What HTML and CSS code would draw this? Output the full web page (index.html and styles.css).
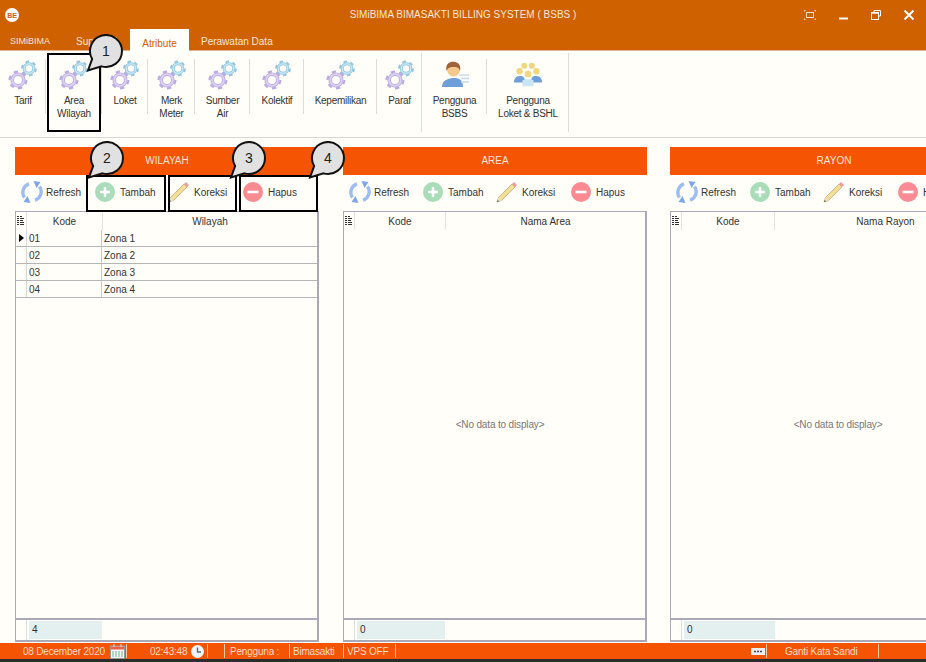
FILE: index.html
```html
<!DOCTYPE html>
<html>
<head>
    <title>SIMiBIMA BIMASAKTI BILLING SYSTEM ( BSBS )</title>
    <link rel="stylesheet" href="styles.css">
</head>
<body>
    <svg class="defs" width="0" height="0">
        <symbol id="gears" viewBox="0 0 30 30">
            <circle cx="21" cy="8.5" r="4.8" fill="none" stroke="#8fc6dd" stroke-width="3"/>
            <circle cx="21" cy="8.5" r="4.8" fill="none" stroke="#c8e6f1" stroke-width="1.4"/>
            <circle cx="21" cy="8.5" r="7" fill="none" stroke="#8fc6dd" stroke-width="1.8" pathLength="60" stroke-dasharray="5 5"/>
            <circle cx="10" cy="20" r="5.8" fill="none" stroke="#bcabe2" stroke-width="3.6"/>
            <circle cx="10" cy="20" r="5.8" fill="none" stroke="#dcd2f2" stroke-width="1.8"/>
            <circle cx="10" cy="20" r="8.4" fill="none" stroke="#bcabe2" stroke-width="2.2" pathLength="60" stroke-dasharray="5 5"/>
        </symbol>
        <symbol id="refresh" viewBox="0 0 22 22">
            <path d="M3.5 16.5 A9 9 0 0 1 8 2.8" fill="none" stroke="#9dbdf0" stroke-width="3.4"/>
            <path d="M18.5 5.5 A9 9 0 0 1 14 19.2" fill="none" stroke="#9dbdf0" stroke-width="3.4"/>
            <path d="M12.5 0 L19.5 1 L15.5 7 Z" fill="#7ea6e8"/>
            <path d="M9.5 22 L2.5 21 L6.5 15 Z" fill="#7ea6e8"/>
        </symbol>
        <symbol id="plus" viewBox="0 0 20 20">
            <circle cx="10" cy="10" r="10" fill="#a9dcb9"/>
            <path d="M10 5 V15 M5 10 H15" stroke="#fff" stroke-width="2.4"/>
        </symbol>
        <symbol id="pencil" viewBox="0 0 22 22">
            <path d="M1 21 L2.5 16.5 L16 3 L19 6 L5.5 19.5 Z" fill="#f2de98" stroke="#bda562" stroke-width=".7"/>
            <path d="M1 21 L2.5 16.5 L5.5 19.5 Z" fill="#eadfc6"/>
            <path d="M1 21 L1.7 18.9 L3.1 20.3 Z" fill="#555"/>
            <path d="M16 3 L18 1 L21 4 L19 6 Z" fill="#ee9aa0"/>
        </symbol>
        <symbol id="minus" viewBox="0 0 20 20">
            <circle cx="10" cy="10" r="10" fill="#fb8b93"/>
            <path d="M4.5 10 H15.5" stroke="#fff" stroke-width="2.6"/>
        </symbol>
        <symbol id="lines" viewBox="0 0 8 10">
            <path d="M0 .5 H2 M0 2.5 H2 M0 4.5 H2 M0 6.5 H2 M0 8.5 H2 M3 .5 H5 M3 2.5 H7 M3 4.5 H6 M3 6.5 H7 M3 8.5 H7" stroke="#333" stroke-width="1"/>
        </symbol>
    </svg>

    <header class="titlebar">
        <svg class="logo" width="14" height="14" viewBox="0 0 14 14">
            <circle cx="7" cy="7" r="7" fill="#fff"/>
            <text x="7" y="9.6" text-anchor="middle" font-size="7" font-weight="bold" fill="#d8561a">BE</text>
        </svg>
        <span class="title">SIMiBIMA BIMASAKTI BILLING SYSTEM ( BSBS )</span>
        <div class="winbtns">
            <svg width="12" height="10" viewBox="0 0 12 10">
                <path d="M0 2 V0 H2 M10 0 H12 V2 M12 8 V10 H10 M2 10 H0 V8" fill="none" stroke="#f6ddc6"/>
                <rect x="2.5" y="2.5" width="7" height="5" fill="none" stroke="#f6ddc6"/>
            </svg>
            <svg width="9" height="10" viewBox="0 0 9 10"><path d="M0 8.5 H9" stroke="#fff" stroke-width="2"/></svg>
            <svg width="10" height="10" viewBox="0 0 10 10">
                <path d="M3 2 V.5 H9.5 V6 H7.5" fill="none" stroke="#fff"/>
                <rect x=".5" y="2.5" width="7" height="7" fill="none" stroke="#fff"/>
                <path d="M0 3 H8" stroke="#fff" stroke-width="1.4"/>
            </svg>
            <svg width="10" height="10" viewBox="0 0 10 10"><path d="M.5 .5 L9.5 9.5 M9.5 .5 L.5 9.5" stroke="#fff" stroke-width="2"/></svg>
        </div>
    </header>

    <nav class="tabs">
        <a class="tab tab-simibima">SIMiBIMA</a>
        <a class="tab tab-super">Supervisi</a>
        <a class="tab tab-active">Atribute</a>
        <a class="tab">Perawatan Data</a>
    </nav>

    <section class="ribbon">
        <div class="rb-item w45"><svg class="gear"><use href="#gears"/></svg><span>Tarif</span></div>
        <div class="rb-item w57"><svg class="gear"><use href="#gears"/></svg><span>Area<br>Wilayah</span></div>
        <div class="rb-item w45"><svg class="gear"><use href="#gears"/></svg><span>Loket</span></div>
        <div class="rb-item w47"><svg class="gear"><use href="#gears"/></svg><span>Merk<br>Meter</span></div>
        <div class="rb-item w55"><svg class="gear"><use href="#gears"/></svg><span>Sumber<br>Air</span></div>
        <div class="rb-item w54"><svg class="gear"><use href="#gears"/></svg><span>Kolektif</span></div>
        <div class="rb-item w73"><svg class="gear"><use href="#gears"/></svg><span>Kepemilikan</span></div>
        <div class="rb-item w44 rb-long"><svg class="gear"><use href="#gears"/></svg><span>Paraf</span></div>
        <div class="rb-item w65">
            <svg class="gear" viewBox="0 0 30 30">
                <path d="M2 27 C2 20 8 19 12 18 H16 C20 19 23 20 23 27 Z" fill="#6f9fd8"/>
                <circle cx="13.5" cy="10" r="6.5" fill="#f5c98d"/>
                <path d="M6.5 11 C5 3 11 1 15 2 C20 3 21 7 20 11 C19 7 16 7 14 7 C11 7 8 7 6.5 11 Z" fill="#a0623a"/>
                <path d="M19 15 H29 M21 18.5 H29 M21 22 H29" stroke="#c5dbe8" stroke-width="1.6"/>
            </svg>
            <span>Pengguna<br>BSBS</span>
        </div>
        <div class="rb-item w82 rb-long">
            <svg class="gear" viewBox="-1 -1 32 32">
                <circle cx="11" cy="5" r="3.2" fill="#f0d67e"/>
                <circle cx="19" cy="5" r="3.2" fill="#f0d67e"/>
                <circle cx="6" cy="11" r="3.4" fill="#f0d67e"/>
                <circle cx="24" cy="11" r="3.4" fill="#f0d67e"/>
                <path d="M0 23 C0 17 4 16 7 16 C10 16 12 18 12 23 Z" fill="#6f9fd8"/>
                <path d="M18 23 C18 18 20 16 23 16 C26 16 30 17 30 23 Z" fill="#6f9fd8"/>
                <path d="M9 27 V21 C10 19 20 19 21 21 V27 Z" fill="#c9e4f3"/>
                <circle cx="15" cy="14" r="3.6" fill="#f0d67e"/>
            </svg>
            <span>Pengguna<br>Loket &amp; BSHL</span>
        </div>
    </section>

    <main class="panels">
        <section class="panel p-wilayah">
            <h3 class="panel-head">WILAYAH</h3>
            <div class="toolbar">
                <a class="tool t-refresh"><svg class="ic22"><use href="#refresh"/></svg>Refresh</a>
                <a class="tool t-add"><svg class="ic20"><use href="#plus"/></svg>Tambah</a>
                <a class="tool t-edit"><svg class="ic22"><use href="#pencil"/></svg>Koreksi</a>
                <a class="tool t-del"><svg class="ic20"><use href="#minus"/></svg>Hapus</a>
            </div>
            <div class="grid">
                <div class="grid-row grid-head">
                    <div class="c-ind"><svg class="ic-lines"><use href="#lines"/></svg></div>
                    <div class="c-kode">Kode</div>
                    <div class="c-name">Wilayah</div>
                </div>
                <div class="grid-body">
                    <div class="grid-row data"><div class="c-ind"><i class="cursor"></i></div><div class="c-kode">01</div><div class="c-name">Zona 1</div></div>
                    <div class="grid-row data"><div class="c-ind"></div><div class="c-kode">02</div><div class="c-name">Zona 2</div></div>
                    <div class="grid-row data"><div class="c-ind"></div><div class="c-kode">03</div><div class="c-name">Zona 3</div></div>
                    <div class="grid-row data"><div class="c-ind"></div><div class="c-kode">04</div><div class="c-name">Zona 4</div></div>
                </div>
                <div class="grid-foot"><div class="c-ind"></div><div class="count">4</div></div>
            </div>
        </section>

        <section class="panel p-area">
            <h3 class="panel-head">AREA</h3>
            <div class="toolbar">
                <a class="tool t-refresh"><svg class="ic22"><use href="#refresh"/></svg>Refresh</a>
                <a class="tool t-add"><svg class="ic20"><use href="#plus"/></svg>Tambah</a>
                <a class="tool t-edit"><svg class="ic22"><use href="#pencil"/></svg>Koreksi</a>
                <a class="tool t-del"><svg class="ic20"><use href="#minus"/></svg>Hapus</a>
            </div>
            <div class="grid">
                <div class="grid-row grid-head">
                    <div class="c-ind"><svg class="ic-lines"><use href="#lines"/></svg></div>
                    <div class="c-kode">Kode</div>
                    <div class="c-name">Nama Area</div>
                </div>
                <div class="grid-body empty">&lt;No data to display&gt;</div>
                <div class="grid-foot"><div class="c-ind"></div><div class="count">0</div></div>
            </div>
        </section>

        <section class="panel p-rayon">
            <h3 class="panel-head">RAYON</h3>
            <div class="toolbar">
                <a class="tool t-refresh"><svg class="ic22"><use href="#refresh"/></svg>Refresh</a>
                <a class="tool t-add"><svg class="ic20"><use href="#plus"/></svg>Tambah</a>
                <a class="tool t-edit"><svg class="ic22"><use href="#pencil"/></svg>Koreksi</a>
                <a class="tool t-del"><svg class="ic20"><use href="#minus"/></svg>Hapus</a>
            </div>
            <div class="grid">
                <div class="grid-row grid-head">
                    <div class="c-ind"><svg class="ic-lines"><use href="#lines"/></svg></div>
                    <div class="c-kode">Kode</div>
                    <div class="c-name">Nama Rayon</div>
                </div>
                <div class="grid-body empty">&lt;No data to display&gt;</div>
                <div class="grid-foot"><div class="c-ind"></div><div class="count">0</div></div>
            </div>
        </section>
    </main>

    <footer class="statusbar">
        <div class="st st-date">08 December 2020
            <svg width="15" height="15" viewBox="0 0 15 15">
                <rect x=".5" y="2" width="14" height="12.5" fill="#f4f4f4" stroke="#999"/>
                <rect x="1" y="2.5" width="13" height="3" fill="#e8604c"/>
                <path d="M2 8 H13 M2 10 H13 M2 12 H13" stroke="#6fb59a" stroke-dasharray="2 1"/>
                <path d="M4 0 V3 M11 0 V3" stroke="#ddd"/>
            </svg>
        </div>
        <div class="st st-time">02:43:48
            <svg width="13" height="13" viewBox="0 0 13 13">
                <circle cx="6.5" cy="6.5" r="6.5" fill="#f2f4f8"/>
                <path d="M6.5 2.5 V7 H10" fill="none" stroke="#5b6a86" stroke-width="1.4"/>
            </svg>
        </div>
        <div class="st st-gap"></div>
        <div class="st st-user">Pengguna :</div>
        <div class="st st-name">Bimasakti</div>
        <div class="st st-vps">VPS OFF</div>
        <div class="st st-spacer"></div>
        <div class="st st-kbd">
            <svg width="14" height="7" viewBox="0 0 14 7">
                <rect width="14" height="7" fill="#eee"/>
                <path d="M3 3.5 H11" stroke="#444" stroke-width="1.4" stroke-dasharray="2 1"/>
            </svg>
        </div>
        <div class="st st-pass">Ganti Kata Sandi</div>
    </footer>
    <div class="strip"></div>

    <!-- penanda langkah di atas layar -->
    <div class="mark m1"></div>
    <div class="mark m2"></div>
    <div class="mark m3"></div>
    <div class="mark m4"></div>

    <div class="callout c1">
        <svg width="40" height="40" viewBox="0 0 40 40"><path d="M4 36.5 L8.1 25 A16 16 0 1 1 17.5 32.4 Z" fill="#e1e1e1" stroke="#111" stroke-width="2"/></svg>
        <span>1</span>
    </div>
    <div class="callout c2">
        <svg width="40" height="40" viewBox="0 0 40 40"><path d="M4 36.5 L8.1 25 A16 16 0 1 1 17.5 32.4 Z" fill="#e1e1e1" stroke="#111" stroke-width="2"/></svg>
        <span>2</span>
    </div>
    <div class="callout c3">
        <svg width="40" height="40" viewBox="0 0 40 40"><path d="M4 36.5 L8.1 25 A16 16 0 1 1 17.5 32.4 Z" fill="#e1e1e1" stroke="#111" stroke-width="2"/></svg>
        <span>3</span>
    </div>
    <div class="callout c4">
        <svg width="40" height="40" viewBox="0 0 40 40"><path d="M4 36.5 L8.1 25 A16 16 0 1 1 17.5 32.4 Z" fill="#e1e1e1" stroke="#111" stroke-width="2"/></svg>
        <span>4</span>
    </div>
</body>
</html>
```

FILE: styles.css
```css
html, body {
    margin: 0;
    height: 662px;
    overflow: hidden;
}
body {
    display: flex;
    flex-direction: column;
    position: relative;
    background: #fffef9;
    font-family: "Liberation Sans", Arial, sans-serif;
    font-size: 10px;
    color: #333;
}
.defs {
    position: absolute;
}

/* title bar */
.titlebar {
    height: 29px;
    flex: none;
    display: flex;
    align-items: center;
    position: relative;
    background: #d06100;
}
.logo {
    margin-left: 5px;
}
.title {
    position: absolute;
    left: 0;
    right: 0;
    text-align: center;
    font-size: 10px;
    color: #f6e6d6;
}
.winbtns {
    margin-left: auto;
    display: flex;
    align-items: center;
    gap: 23px;
    padding-right: 12px;
}

/* tabs */
.tabs {
    height: 22px;
    flex: none;
    display: flex;
    background: #d06100;
    border-bottom: 1px solid #e0b48c;
    box-sizing: border-box;
}
.tab {
    display: flex;
    align-items: center;
    padding-top: 3px;
    color: #f6e6d6;
}
.tab-simibima {
    margin-left: 10px;
    width: 66px;
    font-size: 9px;
}
.tab-super {
    width: 54px;
}
.tab-active {
    width: 59px;
    height: 22px;
    justify-content: center;
    margin-right: 12px;
    background: #fffef9;
    color: #d06100;
}

/* ribbon */
.ribbon {
    height: 87px;
    flex: none;
    display: flex;
    box-sizing: border-box;
    border-bottom: 1px solid #d8d8d4;
}
.rb-item {
    display: flex;
    flex-direction: column;
    align-items: center;
    box-sizing: border-box;
    position: relative;
    padding-top: 9px;
    line-height: 13px;
    letter-spacing: -.25px;
    text-align: center;
    flex: none;
}
.rb-item::after {
    content: "";
    position: absolute;
    right: 0;
    top: 8px;
    height: 55px;
    border-right: 1px solid #dcdcd8;
}
.rb-item.rb-long::after {
    top: 2px;
    height: 79px;
}
.gear {
    width: 30px;
    height: 30px;
    margin-bottom: 4px;
}
.w45 { width: 46px; }
.w44 { width: 45px; }
.w57 { width: 56px; }
.w47 { width: 47px; }
.w55 { width: 55px; }
.w54 { width: 54px; }
.w73 { width: 73px; }
.w65 { width: 65px; }
.w82 { width: 82px; }

/* panels */
.panels {
    flex: 1;
    display: flex;
    align-items: stretch;
    gap: 24px;
    padding: 9px 0 1px 15px;
    min-height: 0;
    overflow: hidden;
}
.panel {
    display: flex;
    flex-direction: column;
    flex: none;
    width: 304px;
}
.p-area {
    margin-right: -1px;
}
.p-rayon {
    width: 328px;
}
.panel-head {
    height: 28px;
    box-sizing: border-box;
    margin: 0;
    padding-bottom: 1px;
    display: flex;
    align-items: center;
    justify-content: center;
    flex: none;
    background: #f55503;
    color: #f8e3d4;
    font-size: 10px;
    font-weight: normal;
}
.toolbar {
    height: 36px;
    flex: none;
    display: flex;
    align-items: center;
    box-sizing: border-box;
    padding: 0 0 2px 6px;
    white-space: nowrap;
}
.tool {
    display: flex;
    align-items: center;
    flex: none;
}
.t-refresh { width: 74px; gap: 3px; }
.t-add { width: 73px; gap: 5px; }
.t-edit { width: 75px; gap: 4px; }
.t-del { gap: 5px; }
.ic22 {
    width: 22px;
    height: 22px;
}
.ic20 {
    width: 20px;
    height: 20px;
}

/* grid */
.grid {
    flex: 1;
    display: flex;
    flex-direction: column;
    min-height: 0;
    border: solid #a9a9b8;
    border-width: 1px 2px 2px 1px;
}
.grid-row {
    display: flex;
    flex: none;
}
.grid-head {
    height: 18px;
    line-height: 19px;
    text-align: center;
}
.c-ind {
    width: 10px;
    flex: none;
    display: flex;
    align-items: center;
    justify-content: center;
    border-right: 1px solid #e4e4e0;
}
.c-kode {
    width: 75px;
    flex: none;
    border-right: 1px solid #e4e4e0;
}
.p-area .c-kode {
    width: 90px;
}
.p-rayon .c-kode {
    width: 92px;
}
.c-name {
    flex: 1;
}
.ic-lines {
    width: 8px;
    height: 10px;
}
.grid-body {
    flex: 1;
    min-height: 0;
}
.data {
    height: 17px;
    box-sizing: border-box;
    line-height: 18px;
    border-bottom: 1px solid #b5b5b5;
}
.data .c-kode {
    padding-left: 2px;
    box-sizing: border-box;
    border-right: 1px solid #c8c8c8;
}
.data .c-name {
    padding-left: 2px;
}
.data .c-ind {
    border-right: 1px solid #d8d8d8;
}
.cursor {
    border-left: 5px solid #000;
    border-top: 4px solid transparent;
    border-bottom: 4px solid transparent;
}
.empty {
    display: flex;
    align-items: center;
    justify-content: center;
    padding-left: 11px;
    color: #777;
    letter-spacing: -.15px;
}
.p-rayon .empty {
    padding-right: 2px;
}
.grid-foot {
    height: 20px;
    flex: none;
    display: flex;
    border-top: 2px solid #a9a9b8;
}
.grid-foot .c-ind {
    border-right: 1px solid #ddd;
}
.count {
    width: 73px;
    margin: 1px 0 1px 2px;
    padding-left: 3px;
    line-height: 18px;
    box-sizing: border-box;
    background: #e4efef;
}
.p-area .count {
    width: 88px;
}
.p-rayon .count {
    width: 91px;
}

/* status bar */
.statusbar {
    height: 16px;
    flex: none;
    display: flex;
    align-items: stretch;
    letter-spacing: -.2px;
    background: #f55503;
    color: #f8dcc8;
}
.st {
    display: flex;
    align-items: center;
    box-sizing: border-box;
    position: relative;
    white-space: nowrap;
}
.st::after {
    content: "";
    position: absolute;
    right: 0;
    top: 1px;
    bottom: 1px;
    border-right: 1px solid #f8c9a8;
}
.st-date { width: 127px; padding-left: 23px; gap: 5px; }
.st-time { width: 81px; padding-left: 23px; gap: 4px; }
.st-gap { width: 17px; }
.st-user { width: 65px; padding-left: 5px; }
.st-name { width: 54px; padding-left: 3px; }
.st-vps { width: 52px; padding-left: 3px; }
.st-spacer { width: 354px; }
.st-spacer::after { display: none; }
.st-kbd { width: 17px; padding-left: 1px; }
.st-pass { width: 112px; padding-left: 18px; }
.strip {
    height: 3px;
    flex: none;
    background: #2d2d2d;
}

/* overlay: black step boxes and numbered callouts */
.mark {
    position: absolute;
    box-sizing: border-box;
    border: 2px solid #000;
}
.m1 { left: 47px; top: 53px; width: 54px; height: 79px; }
.m2 { left: 86px; top: 175px; width: 80px; height: 37px; }
.m3 { left: 168px; top: 175px; width: 69px; height: 37px; }
.m4 { left: 239px; top: 175px; width: 79px; height: 37px; }
.callout {
    position: absolute;
    width: 40px;
    height: 40px;
}
.callout svg {
    position: absolute;
    left: 0;
    top: 0;
}
.callout span {
    position: absolute;
    left: 7px;
    width: 30px;
    top: 8px;
    line-height: 18px;
    text-align: center;
    font-size: 14px;
    color: #222;
}
.c1 { left: 84px; top: 34px; }
.c2 { left: 85px; top: 141px; }
.c3 { left: 227px; top: 141px; }
.c4 { left: 306px; top: 141px; }
```
